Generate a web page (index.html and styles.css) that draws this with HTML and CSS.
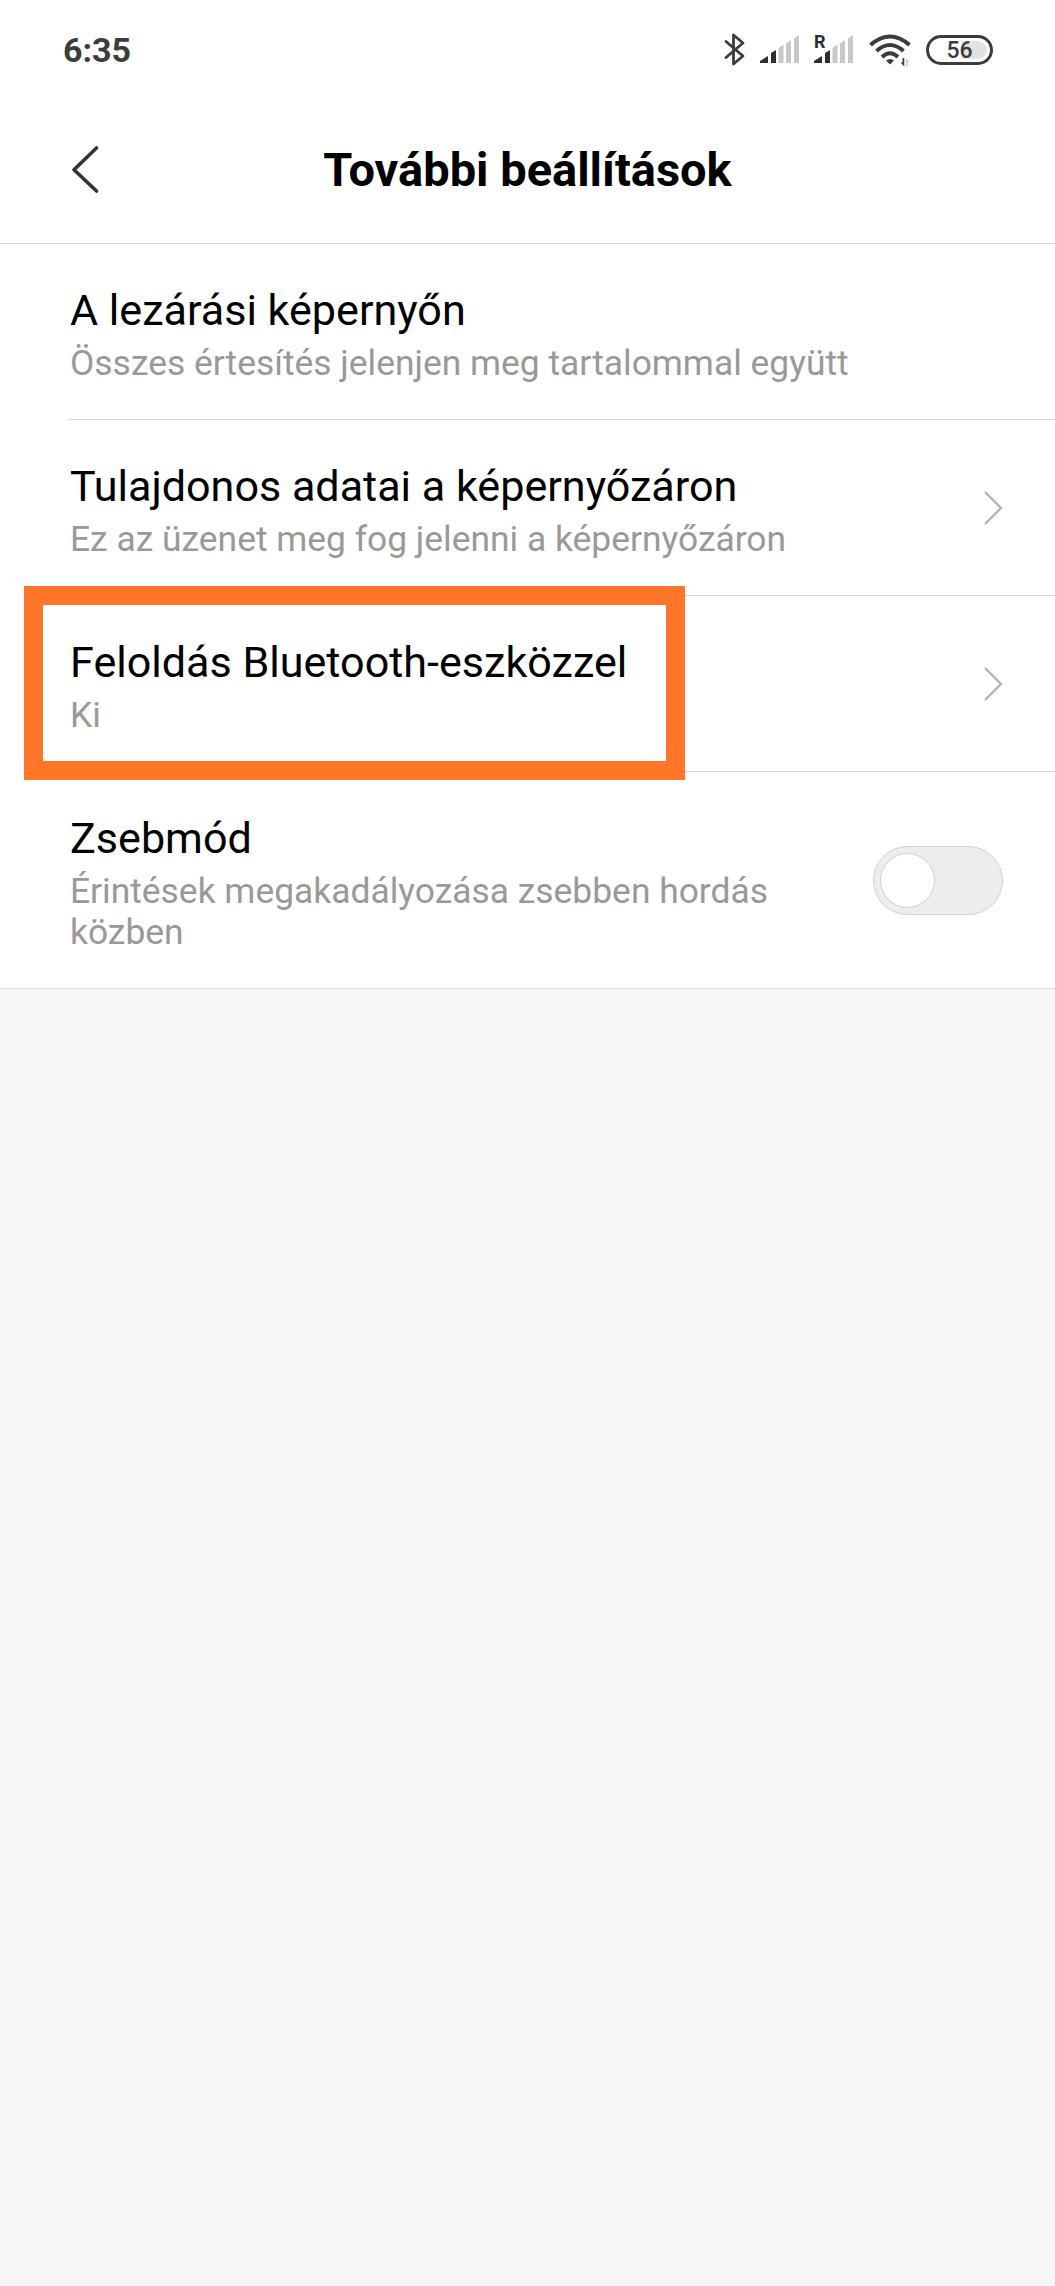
FILE: index.html
```html
<!DOCTYPE html>
<html lang="hu">
<head>
<meta charset="utf-8">
<title>További beállítások</title>
<link rel="stylesheet" href="styles.css">
</head>
<body>
<header class="top">
  <div class="status">
    <span class="clock">6:35</span>
    <div class="status-icons">
      <svg class="bluetooth" width="22" height="36" viewBox="0 0 22 36"><path d="M2 9.500 19 24 9.500 32V3L19 11 2 25.500" fill="none" stroke="#3c3c3c" stroke-width="2.800" stroke-linejoin="round" stroke-linecap="round"/></svg>
      <svg class="signal" width="40" height="36" viewBox="0 0 40 36"><path d="M0 31v-2l8-5v7zM11 31V21l5-3v13z" fill="#2e2e2e"/><path d="M18.500 31V16l5-3.500V31zM26 31V11.500L31 8v23zM34 31V6.500L39 3v28z" fill="#c8c8c8"/></svg>
      <div class="roaming">
        <svg class="signal" width="40" height="36" viewBox="0 0 40 36"><path d="M0 31v-2l8-5v7zM11 31V21l5-3v13z" fill="#2e2e2e"/><path d="M18.500 31V16l5-3.500V31zM26 31V11.500L31 8v23zM34 31V6.500L39 3v28z" fill="#c8c8c8"/></svg>
        <span class="roaming-mark">R</span>
      </div>
      <svg class="wifi" width="42" height="36" viewBox="0 0 42 36"><g fill="none" stroke="#3c3c3c" stroke-width="4"><path d="M1.500 13Q21-4 40.500 13"/><path d="M7.500 19Q21 7 34.500 19"/><path d="M13 25Q21 17.500 29 25"/></g><path d="M17 28.500Q21 25.500 25 28.500L21 32.500z" fill="#3c3c3c"/><path d="M31.500 30.500h2V26h1.800v8.500z" fill="#3c3c3c"/><path d="M37 34.500V26l3.500 4h-1.800v4.500z" fill="#ccc"/></svg>
      <div class="battery">56</div>
    </div>
  </div>
  <div class="bar">
    <svg class="back" width="28" height="48" viewBox="0 0 28 48"><path d="M25.500 2 3 23.800 25.500 45" fill="none" stroke="#333" stroke-width="3.600" stroke-linecap="round" stroke-linejoin="round"/></svg>
    <h1 class="heading">További beállítások</h1>
  </div>
</header>
<main class="list">
  <section class="row">
    <div class="text wide">
      <div class="title">A lezárási képernyőn</div>
      <div class="sub">Összes értesítés jelenjen meg tartalommal együtt</div>
    </div>
  </section>
  <section class="row">
    <div class="text">
      <div class="title">Tulajdonos adatai a képernyőzáron</div>
      <div class="sub">Ez az üzenet meg fog jelenni a képernyőzáron</div>
    </div>
    <svg class="chevron" width="20" height="36" viewBox="0 0 20 36"><path d="M2 2 18 18 2 34" fill="none" stroke="#b0b0b0" stroke-width="2.200"/></svg>
  </section>
  <section class="row">
    <div class="text">
      <div class="title">Feloldás Bluetooth-eszközzel</div>
      <div class="sub">Ki</div>
    </div>
    <svg class="chevron" width="20" height="36" viewBox="0 0 20 36"><path d="M2 2 18 18 2 34" fill="none" stroke="#b0b0b0" stroke-width="2.200"/></svg>
    <div class="highlight"></div>
  </section>
  <section class="row">
    <div class="text">
      <div class="title">Zsebmód</div>
      <div class="sub">Érintések megakadályozása zsebben hordás közben</div>
    </div>
    <div class="switch"><div class="knob"></div></div>
  </section>
</main>
</body>
</html>
```
FILE: styles.css
```css
* { box-sizing: border-box; }
body { margin: 0; min-height: 2286px; background: #f6f6f6; color: #000; font-family: Roboto, "Noto Sans", sans-serif; }
svg { display: block; flex: none; }

/* Status bar and page header */
.top { height: 244px; background: #fff; border-bottom: 1px solid #d9d9d9; }
.status { height: 100px; padding: 0 62px 0 63px; display: flex; justify-content: space-between; align-items: center; }
.clock { font-size: 34px; font-weight: 700; line-height: 40px; color: #3c3c3c; }
.status-icons { display: flex; align-items: center; }
.bluetooth { margin-right: 14px; }
.roaming { position: relative; margin: 0 15px 0 14px; }
.roaming-mark { position: absolute; left: 0; top: 0; font-size: 18px; line-height: 20px; font-weight: 700; color: #2e2e2e; }
.wifi { margin-right: 15px; }
.battery { width: 67px; height: 30px; padding: 3px; border: 3px solid #3c3c3c; border-radius: 15px; display: flex; align-items: center; justify-content: center; font-size: 23px; font-weight: 500; color: #3c3c3c; background: linear-gradient(90deg, #fff 55%, #e2e2e2 55%) content-box; }
.bar { height: 140px; display: grid; grid-template-columns: 28px 1fr 28px; align-items: center; padding: 0 71px; }
.heading { margin: 0; text-align: center; font-size: 47px; font-weight: 700; line-height: 56px; }

/* Settings list */
.list { background: #fff; border-bottom: 1px solid #dcdcdc; }
.row { position: relative; display: flex; align-items: center; justify-content: space-between; min-height: 176px; margin-left: 69px; padding: 35px 52px 35px 1px; border-bottom: 1px solid #d9d9d9; }
.row:last-child { border-bottom: 0; }
.text { max-width: 740px; padding-top: 7px; display: flex; flex-direction: column; gap: 7px; }
.text.wide { max-width: 900px; }
.title { font-size: 43.1px; line-height: 50px; }
.sub { font-size: 35.4px; line-height: 41px; color: #999; }
.highlight { position: absolute; left: -45px; top: -10px; width: 661px; height: 194px; border: 19px solid #ff7628; }
.switch { flex: none; width: 130px; height: 69px; padding: 6px; border: 1px solid #d0d0d0; border-radius: 35px; background: #ededed; }
.knob { width: 55px; height: 55px; border: 1px solid #cfcfcf; border-radius: 50%; background: #fff; }
```
